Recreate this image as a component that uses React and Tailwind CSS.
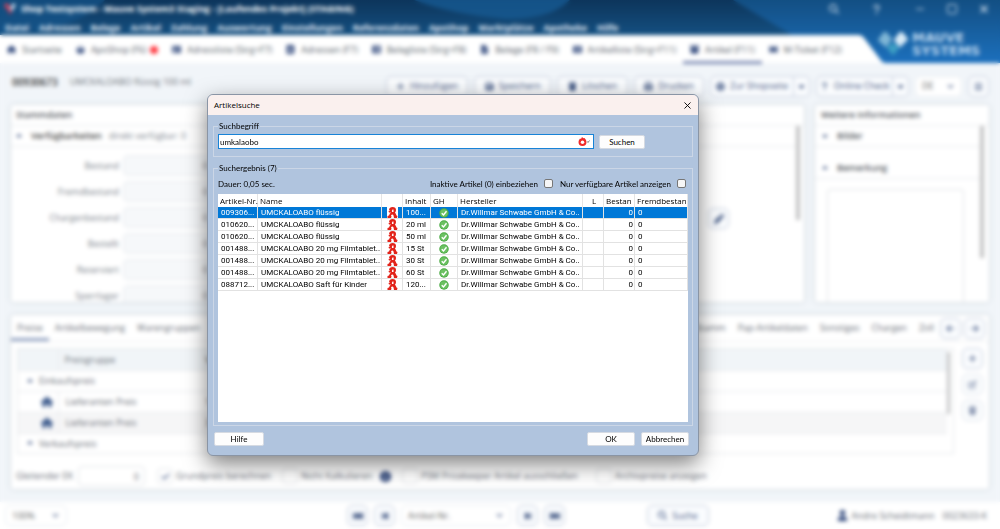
import React from 'react';
import {
  FaHouse, FaBasketShopping, FaAddressCard, FaAddressBook, FaTableList, FaFileLines, FaRectangleList,
  FaBoxArchive, FaTicket, FaMagnifyingGlass, FaPlus, FaFloppyDisk, FaTrash, FaPrint, FaGlobe, FaQuestion,
  FaBars, FaPen, FaArrowLeft, FaArrowRight, FaPenToSquare, FaCircleInfo, FaBackwardFast, FaForwardFast,
  FaBackwardStep, FaForwardStep, FaUser, FaCheck, FaCaretDown, FaCaretUp,
} from 'react-icons/fa6';
import { Minus, Square, X, ChevronDown } from 'lucide-react';

const menu = ['Datei', 'Adressen', 'Belege', 'Artikel', 'Zahlung', 'Auswertung', 'Einstellungen', 'Referenzdaten', 'ApoShop', 'Marktplätze', 'Apotheke', 'Hilfe'];

const tabs = [
  { icon: FaHouse, label: 'Startseite' },
  { icon: FaBasketShopping, label: 'ApoShop (F6)', badge: true },
  { icon: FaAddressCard, label: 'Adressliste (Strg+F7)' },
  { icon: FaAddressBook, label: 'Adressen (F7)' },
  { icon: FaTableList, label: 'Belegliste (Strg+F8)' },
  { icon: FaFileLines, label: 'Belege (F8 / F9)' },
  { icon: FaRectangleList, label: 'Artikelliste (Strg+F11)' },
  { icon: FaBoxArchive, label: 'Artikel (F11)', active: true },
  { icon: FaTicket, label: 'M-Ticket (F12)' },
];

const stock = ['Bestand', 'Fremdbestand', 'Chargenbestand', 'Bestellt', 'Reserviert', 'Sperrlager'];

const results = [
  ['009306...', 'UMCKALOABO flüssig', '100...'],
  ['010620...', 'UMCKALOABO flüssig', '20 ml'],
  ['010620...', 'UMCKALOABO flüssig', '50 ml'],
  ['001488...', 'UMCKALOABO 20 mg Filmtablet..', '15 St'],
  ['001488...', 'UMCKALOABO 20 mg Filmtablet..', '30 St'],
  ['001488...', 'UMCKALOABO 20 mg Filmtablet..', '60 St'],
  ['088712...', 'UMCKALOABO Saft für Kinder', '120...'],
];

function Header() {
  return (
    <header className="relative h-[63px] shrink-0 bg-linear-to-b from-[#11406d] to-[#1d72bd] text-white">
      <svg className="absolute inset-0 h-full w-full" viewBox="0 0 1000 63" preserveAspectRatio="none" aria-hidden="true">
        <defs>
          <linearGradient id="navy" x1="0" y1="0" x2="0" y2="1">
            <stop offset="0" stopColor="#0d355b" />
            <stop offset="1" stopColor="#1a659f" />
          </linearGradient>
          <linearGradient id="blue" x1="0" y1="0" x2="0" y2="1">
            <stop offset="0" stopColor="#134f83" />
            <stop offset="1" stopColor="#1c70bd" />
          </linearGradient>
        </defs>
        <rect width="1000" height="63" fill="url(#navy)" />
        <path d="M0 0H105Q80 30 0 34Z" fill="#16558c" opacity=".7" />
        <path d="M414 0H570Q550 20 505 19Q450 14 414 0Z" fill="#165a92" opacity=".8" />
        <path d="M733 0H1000V63H840Q800 40 733 0Z" fill="url(#blue)" />
        <path d="M0 35H858Q862 35 864 38L880 59Q882 63 886 63H0Z" fill="#ffffff" />
      </svg>
      <div className="relative flex h-[18px] items-center justify-between pr-[10px] pl-1">
        <div className="flex items-center gap-[5px] text-[9px] font-bold">
          <svg className="h-3 w-3" viewBox="0 0 12 12" aria-hidden="true">
            <path d="M0 2 3 0 6 4 5 9Z" fill="#e2435a" />
            <path d="M6 5 9 0 12 2 7 10Z" fill="#c9d8ea" />
            <path d="M3 6 6 12 8 8Z" fill="#a9304d" />
          </svg>
          <h1>Shop Testsystem - Mauve System3 Staging - [Laufendes Projekt] (STAGING)</h1>
        </div>
        <div className="flex items-center gap-8 text-[#d5e1ee]">
          <button aria-label="Suchen"><FaMagnifyingGlass size={10} /></button>
          <button aria-label="Hilfe"><FaQuestion size={11} /></button>
          <div className="flex items-center gap-5">
            <button aria-label="Minimieren"><Minus size={12} /></button>
            <button aria-label="Maximieren"><Square size={12} /></button>
            <button aria-label="Schließen"><X size={12} strokeWidth={3} /></button>
          </div>
        </div>
      </div>
      <nav className="relative flex h-5 items-center gap-[10px] pl-[5px] text-[9px] font-bold text-[#e4ecf5]">
        {menu.map((m) => <button key={m}>{m}</button>)}
      </nav>
      <div className="relative flex h-[26px] items-stretch text-[9px] text-[#555d68]">
        {tabs.map(({ icon: Icon, label, badge, active }) => (
          <button
            key={label}
            className={active
              ? 'flex items-center gap-[6px] border-b-3 border-[#7f8db4] px-[7px]'
              : 'flex items-center gap-[6px] border-b-3 border-transparent px-[7px]'}
          >
            <Icon size={9} className="text-[#2c4479]" />
            {label}
            {badge && <span className="-ml-[2px] h-2 w-2 rounded-full bg-[#ff3c44]" />}
          </button>
        ))}
      </div>
      <div className="absolute right-[10px] bottom-[6px] flex items-center gap-1">
        <svg className="h-6 w-[30px]" viewBox="0 0 30 24" aria-hidden="true">
          <path d="M7 0 13 7 8 14 1 8Z" fill="#7fb6d6" stroke="#7fb6d6" strokeWidth="2" />
          <path d="M23 0 29 7 22 14 17 8Z" fill="#d9ebf7" stroke="#d9ebf7" strokeWidth="2" />
          <path d="M15 12 20 16 15 22 10 16Z" fill="#3d9fc4" stroke="#3d9fc4" strokeWidth="2" />
        </svg>
        <div className="w-[78px] font-['DejaVu_Sans',sans-serif] text-[13px] leading-[13px] font-bold text-[#bcd6ee]">
          <div>MAUVE</div>
          <div>SYSTEMS</div>
        </div>
      </div>
    </header>
  );
}

const btn = 'flex h-[21px] items-center justify-center gap-[5px] rounded-[5px] border border-[#c3cbdc] bg-[#fafcfe] text-[#3d5380]';

function Toolbar() {
  return (
    <div className="flex h-[42px] shrink-0 items-center gap-[6px] pt-1 pr-[11px] pl-3 text-[9px]">
      <div className="flex flex-1 items-center gap-3 pb-2">
        <strong className="text-[10px] font-semibold text-[#333]">00930673</strong>
        <span className="text-[#6c7178]">UMCKALOABO flüssig 100 ml</span>
      </div>
      <button className={`${btn} w-[82px]`}><FaPlus size={9} />Hinzufügen</button>
      <button className={`${btn} w-[77px]`}><FaFloppyDisk size={9} />Speichern</button>
      <button className={`${btn} w-[71px]`}><FaTrash size={9} />Löschen</button>
      <button className={`${btn} w-[70px]`}><FaPrint size={9} />Drucken</button>
      <div className="flex">
        <button className={`${btn} w-[84px] rounded-r-none`}><FaGlobe size={9} />Zur Shopseite</button>
        <button aria-label="Weitere Shops" className={`${btn} w-4 rounded-l-none border-l-0`}><FaCaretDown size={9} /></button>
      </div>
      <div className="flex">
        <button className={`${btn} w-[77px] rounded-r-none`}><FaQuestion size={9} />Online Check</button>
        <button aria-label="Weitere Prüfungen" className={`${btn} w-4 rounded-l-none border-l-0`}><FaCaretDown size={9} /></button>
      </div>
      <FakeSelect label="Sprache" value="DE" width="w-[47px]" />
      <button aria-label="Menü" className={`${btn} w-[21px]`}><FaBars size={9} /></button>
    </div>
  );
}

function FakeSelect({ label, value, width }) {
  return (
    <div className={`grid h-[21px] items-center rounded-[5px] border border-[#e8ecf1] bg-white ${width}`}>
      <select aria-label={label} className="col-start-1 row-start-1 h-full w-full appearance-none bg-transparent px-[6px] text-[9px] text-[#666] outline-none">
        <option>{value}</option>
      </select>
      <ChevronDown size={9} strokeWidth={3} className="pointer-events-none col-start-1 row-start-1 mr-[6px] justify-self-end text-[#3d5380]" />
    </div>
  );
}

const card = 'rounded-[3px] bg-white shadow-[0_0_4px_#c3ccd4]';

function MasterData() {
  return (
    <section className={`${card} flex min-w-0 flex-1 flex-col overflow-hidden`}>
      <h2 className="flex h-[21px] shrink-0 items-center border-b border-[#e8eaed] pl-[5px] text-[9px] font-semibold text-[#50555c]">Stammdaten</h2>
      <div className="flex min-h-0 flex-1">
        <div className="flex-1">
          <div className="flex h-[21px] items-center border-b border-[#e8eaed] pl-1 text-[9px] text-[#7a828c]">
            <FaCaretUp size={8} className="text-[#3d5380]" />
            <strong className="ml-2 font-semibold text-[#444]">Verfügbarkeiten</strong>
            <span className="ml-[7px]">direkt verfügbar: 0</span>
          </div>
          <div className="flex items-center justify-between pt-2 pr-[67px]">
            <div className="flex flex-col gap-[5px]">
              {stock.map((s) => (
                <label key={s} className="flex items-center gap-1 text-[9px] text-[#777e88]">
                  <span className="w-[108px] text-right">{s}</span>
                  <input readOnly defaultValue="0" className="h-[21px] w-[90px] rounded-[5px] border border-[#e6eaee] bg-[#f6f8fa] px-1 text-right outline-none" />
                </label>
              ))}
            </div>
            <button aria-label="Bearbeiten" className={`${btn} mb-6 w-[21px]`}><FaPen size={10} /></button>
          </div>
        </div>
        <div className="mr-1 h-[94px] w-[4px] bg-[#c2c3c4]" />
      </div>
    </section>
  );
}

function MoreInfo() {
  return (
    <section className={`${card} flex w-[174px] shrink-0 flex-col overflow-hidden`}>
      <h2 className="flex h-[21px] shrink-0 items-center border-b border-[#e8eaed] pl-[6px] text-[9px] font-semibold text-[#50555c]">Weitere Informationen</h2>
      <div className="flex min-h-0 flex-1 text-[9px] font-semibold text-[#50555c]">
        <div className="flex flex-1 flex-col">
          <div className="flex h-[21px] shrink-0 items-center gap-2 border-b border-[#e8eaed] pl-[6px]"><FaCaretDown size={8} className="text-[#3d5380]" />Bilder</div>
          <div className="mt-[11px] flex h-[21px] shrink-0 items-center gap-2 border-b border-[#e8eaed] pl-[6px]"><FaCaretUp size={8} className="text-[#3d5380]" />Bemerkung</div>
          <textarea aria-label="Bemerkung" className="mt-[10px] mr-4 ml-3 min-h-0 flex-1 resize-none rounded-t-[4px] border border-b-0 border-[#dfe2e5] outline-none" />
        </div>
        <div className="mr-[5px] h-[132px] w-[4px] bg-[#c2c3c4]" />
      </div>
    </section>
  );
}

function PriceRow({ shaded, value }) {
  return (
    <tr className={shaded ? 'h-[21px] border-b border-[#e8eaed] bg-[#f6f6f7]' : 'h-[21px] border-b border-[#e8eaed]'}>
      <td className="border-r border-[#e8eaed]"><FaHouse size={12} className="ml-[23px] text-[#3d5b8d]" /></td>
      <td className="pl-[7px]">Lieferanten Preis</td>
      <td>{value}</td>
    </tr>
  );
}

function Prices() {
  return (
    <section className={`${card} mx-[11px] mt-[13px] flex h-[174px] shrink-0 flex-col text-[9px] text-[#666c75]`}>
      <div className="flex h-[27px] shrink-0 items-stretch justify-between border-b border-[#eceef0] pr-[4px]">
        <div className="flex">
          <button className="border-b-3 border-[#8fa0c0] px-[6px] pt-[3px]">Preise</button>
          <button className="px-[6px]">Artikelbewegung</button>
          <button className="px-[6px]">Warengruppen</button>
        </div>
        <div className="flex items-center gap-[12px]">
          <button>Stamm</button>
          <button>Pap-Artikeldaten</button>
          <button>Sonstiges</button>
          <button>Chargen</button>
          <button>Zoll</button>
          <div className="-ml-[6px] flex gap-[3px]">
            <button aria-label="Zurück" className={`${btn} w-[21px]`}><FaArrowLeft size={9} /></button>
            <button aria-label="Weiter" className={`${btn} w-[21px]`}><FaArrowRight size={9} /></button>
          </div>
        </div>
      </div>
      <div className="mt-[6px] mr-[6px] ml-[6px] flex gap-2">
        <div className="flex flex-1 border border-[#e4e7ea]">
          <table className="flex-1 table-fixed border-collapse text-left">
            <colgroup><col className="w-10" /><col className="w-[147px]" /><col /></colgroup>
            <thead>
              <tr className="h-[21px] border-b border-[#e8eaed] bg-[#f1f5f8]">
                <th className="border-r border-[#e8eaed]" aria-label="Typ" />
                <th className="pl-[6px] font-normal">Preisgruppe</th>
                <th className="font-normal">VK</th>
              </tr>
            </thead>
            <tbody>
              <tr className="h-[21px] border-b border-[#e8eaed]">
                <td colSpan={3}><span className="flex items-center gap-[5px] pl-2"><FaCaretUp size={8} className="text-[#3d5380]" />Einkaufspreis</span></td>
              </tr>
              <PriceRow value="1" />
              <PriceRow value="3" shaded />
              <tr className="h-[20px]">
                <td colSpan={3}><span className="flex items-center gap-[5px] pl-2"><FaCaretUp size={8} className="text-[#3d5380]" />Verkaufspreis</span></td>
              </tr>
            </tbody>
          </table>
          <div className="mt-[3px] mr-[3px] h-[62px] w-[3px] bg-[#c2c3c4]" />
        </div>
        <div className="flex flex-col gap-[5px]">
          <button aria-label="Neu" className={`${btn} w-[21px]`}><FaPlus size={9} /></button>
          <button aria-label="Ändern" className={`${btn} w-[21px] opacity-60`}><FaPenToSquare size={9} /></button>
          <button aria-label="Löschen" className={`${btn} w-[21px] opacity-60`}><FaTrash size={9} /></button>
        </div>
      </div>
      <div className="flex flex-1 items-center pt-[9px] pl-[5px]">
        <label className="flex w-[141px] items-center gap-[5px]">
          Gleitender EK
          <input readOnly defaultValue="0" className="h-5 w-[67px] rounded-[4px] border border-[#e1e4e8] px-[5px] text-right outline-none" />
        </label>
        <Check label="Grundpreis berechnen" checked width="w-[125px]" />
        <Check label="Nicht Kalkulieren" width="w-[98px]" />
        <FaCircleInfo size={11} className="mr-[11px] text-[#2c4479]" />
        <Check label="PSM Pricekeeper Artikel ausschließen" width="w-[194px]" />
        <Check label="Archivpreise anzeigen" width="w-[130px]" />
      </div>
    </section>
  );
}

function Check({ label, checked, width }) {
  return (
    <label className={`flex shrink-0 items-center gap-[3px] whitespace-nowrap ${width}`}>
      <span className="grid place-items-center">
        <input type="checkbox" readOnly checked={!!checked} className="col-start-1 row-start-1 h-4 w-4 appearance-none rounded-[4px] border border-[#e1e4e8] bg-white" />
        {checked && <FaCheck size={9} className="pointer-events-none col-start-1 row-start-1 text-[#3d5380]" />}
      </span>
      {label}
    </label>
  );
}

function Footer() {
  return (
    <footer className="mt-[13px] flex h-[27px] shrink-0 items-center bg-white pr-[13px] pl-[5px] text-[9px] text-[#666c75]">
      <div className="flex-1"><FakeSelect label="Zoom" value="100%" width="w-[62px]" /></div>
      <div className="flex items-center gap-[6px]">
        <button aria-label="Erster" className={`${btn} w-[21px]`}><FaBackwardFast size={10} /></button>
        <button aria-label="Voriger" className={`${btn} w-[21px]`}><FaBackwardStep size={10} /></button>
        <FakeSelect label="Suchfeld" value="Artikel-Nr." width="w-[110px]" />
        <button aria-label="Nächster" className={`${btn} w-[21px]`}><FaForwardStep size={10} /></button>
        <button aria-label="Letzter" className={`${btn} w-[21px]`}><FaForwardFast size={10} /></button>
      </div>
      <button className={`${btn} ml-[82px] w-[62px]`}><FaMagnifyingGlass size={9} />Suche</button>
      <div className="flex w-[278px] items-center justify-end gap-1 whitespace-nowrap">
        <FaUser size={11} className="text-[#2c4479]" />
        <span>Andre Scheidtmann</span>
        <span className="ml-1">0023633-K</span>
      </div>
    </footer>
  );
}

function PharmacyA() {
  return (
    <svg className="mx-auto block h-[11px] w-[11px]" viewBox="0 0 22 22" aria-hidden="true">
      <rect width="22" height="22" fill="#fff" />
      <path d="M4 5Q5 0 11 0Q18 0 18 6Q18 9 16 11Q18 14 19 17L21 18 20 22H14L13 17Q12 15 11 15Q9 15 8 17L9 19 8 22H1V18L4 17Q5 13 8 11H4L3 8 6 7Z" fill="#e2231a" />
      <path d="M11 5Q9 7 10 10H13V5Z" fill="#fff" />
    </svg>
  );
}

function GreenCheck() {
  return (
    <svg className="mx-auto block h-[10px] w-[10px]" viewBox="0 0 20 20" aria-hidden="true">
      <circle cx="10" cy="10" r="9.5" fill="#4cab45" />
      <circle cx="10" cy="10" r="7.5" fill="#6cc163" />
      <path d="M5.5 10.5 9 14 15 6.5" fill="none" stroke="#fff" strokeWidth="2.8" />
    </svg>
  );
}

const dlgBtn = 'h-[14px] rounded-[2px] border border-[#d5dae2] bg-[#fdfdfd] text-center leading-[12px]';
const th = 'border-r border-[#e5e5e5] p-0 pl-[2px] font-normal whitespace-nowrap';
const td = 'overflow-hidden border-r border-b border-[#e2e2e2] p-0 pl-[3px] whitespace-nowrap';

function SearchDialog() {
  return (
    <div
      role="dialog"
      aria-label="Artikelsuche"
      className="absolute top-[94px] left-[207px] flex w-[492px] flex-col overflow-hidden rounded-[6px] border border-[#8a95a5] bg-[#b0c4de] font-['Lato',sans-serif] text-[8px] text-black shadow-[0_8px_22px_rgba(0,0,0,0.5)]"
    >
      <div className="flex h-5 items-center justify-between bg-[#faf0ee] pr-[5px] pl-[6px] font-['Open_Sans',sans-serif]">
        <h2 className="text-[8px]">Artikelsuche</h2>
        <button aria-label="Schließen"><X size={11} strokeWidth={2} /></button>
      </div>
      <div className="flex flex-col px-[5px] pt-[6px] pb-[9px]">
        <fieldset className="min-w-0 border border-[#cbd6e6] px-1 pt-[3px] pb-[7px]">
          <legend className="px-[1px] leading-[10px]">Suchbegriff</legend>
          <div className="flex items-center gap-[5px]">
            <div className="flex h-[15px] w-[376px] items-center border border-[#1883d7] bg-white pr-[3px]">
              <input aria-label="Suchbegriff" defaultValue="umkalaobo" className="h-full min-w-0 flex-1 pl-[1px] outline-none" />
              <svg className="h-[9px] w-3" viewBox="0 0 24 18" aria-hidden="true">
                <path d="M8 0Q10 3 13 2 17 6 17 10A8 8 0 0 1 1 10Q1 6 4 3L6 4Z" fill="#f02a2a" />
                <circle cx="9" cy="10.500" r="3.500" fill="#fff" />
                <path d="m19 9 1 2 3-4" fill="none" stroke="#555" strokeWidth="1.500" />
              </svg>
            </div>
            <button className={`${dlgBtn} w-[46px]`}>Suchen</button>
          </div>
        </fieldset>
        <fieldset className="mt-[6px] min-w-0 border border-[#cbd6e6] px-1 pb-[3px]">
          <legend className="px-[1px] leading-[10px]">Suchergebnis (7)</legend>
          <div className="flex h-[21px] items-center justify-between pr-[2px]">
            <span>Dauer: 0,05 sec.</span>
            <div className="flex items-center gap-[7px]">
              <label className="flex items-center gap-[6px]">Inaktive Artikel (0) einbeziehen
                <input type="checkbox" className="h-[9px] w-[9px] appearance-none rounded-[2px] border border-[#777] bg-[#f6f6f6]" />
              </label>
              <label className="flex items-center gap-[6px]">Nur verfügbare Artikel anzeigen
                <input type="checkbox" className="h-[9px] w-[9px] appearance-none rounded-[2px] border border-[#777] bg-[#f6f6f6]" />
              </label>
            </div>
          </div>
          <div className="h-[228px] overflow-hidden bg-white font-['Roboto',sans-serif] text-[8px]">
            <table className="w-full table-fixed border-separate border-spacing-0 text-left leading-[11px]">
              <colgroup>
                <col className="w-[40px]" /><col className="w-[124px]" /><col className="w-[21px]" /><col className="w-[28px]" />
                <col className="w-[27px]" /><col className="w-[125px]" /><col className="w-[21px]" /><col className="w-[31px]" /><col />
              </colgroup>
              <thead className="font-['Open_Sans',sans-serif]">
                <tr className="h-[13px]">
                  <th className={th}>Artikel-Nr.</th>
                  <th className={th}>Name</th>
                  <th className={th} aria-label="Apothekenpflichtig" />
                  <th className={th}>Inhalt</th>
                  <th className={th}>GH</th>
                  <th className={th}>Hersteller</th>
                  <th className={`${th} text-center`}>L</th>
                  <th className={th}>Bestan</th>
                  <th className={th}>Fremdbestan</th>
                </tr>
              </thead>
              <tbody>
                {results.map(([nr, name, amount], i) => (
                  <tr key={i} className={i === 0 ? 'h-3 bg-[#0078d7] text-white' : 'h-3'}>
                    <td className={td}>{nr}</td>
                    <td className={td}>{name}</td>
                    <td className="border-r border-b border-[#e2e2e2] p-0"><PharmacyA /></td>
                    <td className={td}>{amount}</td>
                    <td className="border-r border-b border-[#e2e2e2] p-0"><GreenCheck /></td>
                    <td className={td}>Dr.Willmar Schwabe GmbH &amp; Co..</td>
                    <td className={td} />
                    <td className={`${td} pr-[1px] text-right`}>0</td>
                    <td className={td}>0</td>
                  </tr>
                ))}
              </tbody>
            </table>
          </div>
        </fieldset>
        <div className="mt-[6px] flex justify-between pl-[1px]">
          <button className={`${dlgBtn} w-[50px]`}>Hilfe</button>
          <div className="flex gap-[6px] pr-[4px]">
            <button className={`${dlgBtn} w-12`}>OK</button>
            <button className={`${dlgBtn} w-12`}>Abbrechen</button>
          </div>
        </div>
      </div>
    </div>
  );
}

export default function App() {
  return (
    <div className="relative h-screen overflow-hidden font-['Open_Sans','Noto_Sans',sans-serif]">
      <div className="flex h-full flex-col bg-[#f1f5f9]">
        <Header />
        <Toolbar />
        <main className="flex min-h-0 flex-1 gap-[11px] px-[11px]">
          <MasterData />
          <MoreInfo />
        </main>
        <Prices />
        <Footer />
      </div>
      <div className="absolute inset-0 backdrop-blur-[2px]" />
      <SearchDialog />
    </div>
  );
}
